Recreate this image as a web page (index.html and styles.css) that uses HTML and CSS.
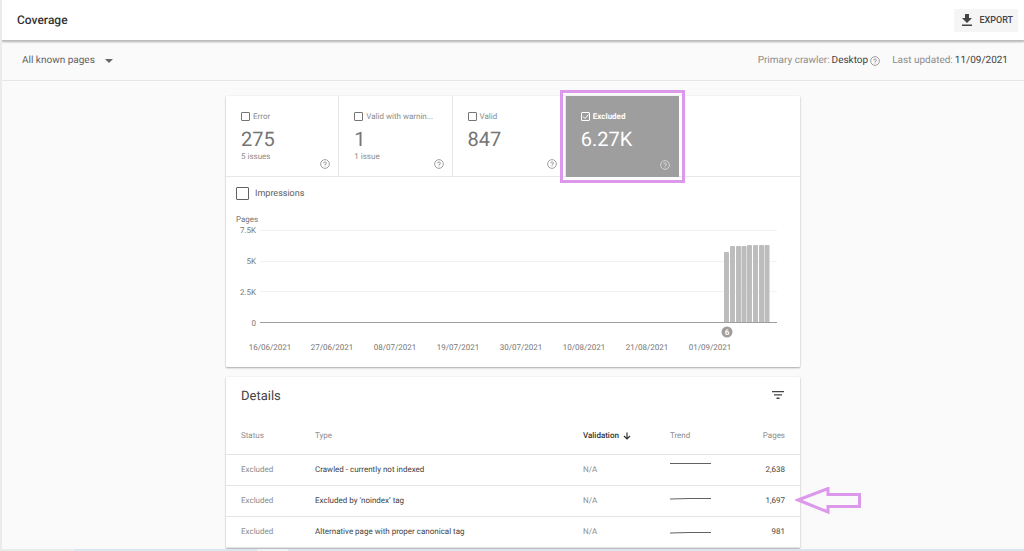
FILE: index.html
```html
<!DOCTYPE html>
<html lang="en">
<head>
<meta charset="utf-8">
<title>Coverage</title>
<link rel="stylesheet" href="styles.css">
</head>
<body>
<svg class="defs" aria-hidden="true">
  <symbol id="help" viewBox="0 0 24 24"><circle cx="12" cy="12" r="10.500" fill="none" stroke="currentColor" stroke-width="2"/><path fill="currentColor" d="M11 18h2v-2h-2v2zm1-12c-2.210 0-4 1.790-4 4h2c0-1.100.9-2 2-2s2 .9 2 2c0 2-3 1.750-3 5h2c0-2.250 3-2.500 3-5 0-2.210-1.790-4-4-4z"/></symbol>
</svg>
<header class="topbar">
  <h1 class="title">Coverage</h1>
  <button class="export" type="button">
    <svg class="export-icon" viewBox="0 0 14 14" aria-hidden="true"><path fill="currentColor" d="M5 1h4v4h3L7 10 2 5h3zM2 11.500h10V13H2z"/></svg>
    EXPORT
  </button>
</header>
<div class="subbar">
  <div class="picker">
    <select class="picker-select" aria-label="Pages filter"><option>All known pages</option></select>
  </div>
  <div class="meta">
    <span class="meta-item">Primary crawler: <b>Desktop</b> <svg class="help"><use href="#help"/></svg></span>
    <span class="meta-item">Last updated: <b>11/09/2021</b></span>
  </div>
</div>
<main class="content">
  <section class="card">
    <div class="tiles">
      <div class="tile">
        <label class="tile-label"><input class="check" type="checkbox"><span class="tile-name">Error</span></label>
        <div class="count">275</div>
        <div class="issues">5 issues</div>
        <svg class="help tile-help"><use href="#help"/></svg>
      </div>
      <div class="tile">
        <label class="tile-label"><input class="check" type="checkbox"><span class="tile-name">Valid with warnin...</span></label>
        <div class="count">1</div>
        <div class="issues">1 issue</div>
        <svg class="help tile-help"><use href="#help"/></svg>
      </div>
      <div class="tile">
        <label class="tile-label"><input class="check" type="checkbox"><span class="tile-name">Valid</span></label>
        <div class="count">847</div>
        <svg class="help tile-help"><use href="#help"/></svg>
      </div>
      <div class="tile tile-selected">
        <label class="tile-label"><span class="check-wrap"><input class="check" type="checkbox" checked><svg class="tick" viewBox="0 0 9 9" aria-hidden="true"><path d="M2 4.500L4 6.500L7.500 2.500"/></svg></span><span class="tile-name">Excluded</span></label>
        <div class="count">6.27K</div>
        <svg class="help tile-help"><use href="#help"/></svg>
      </div>
    </div>
    <label class="impressions"><input class="check check-large" type="checkbox">Impressions</label>
    <svg class="chart" viewBox="0 0 574 157" role="img" aria-label="Excluded pages over time">
      <g class="grid"><path d="M34 20.500H551M34 51.500H551M34 81.500H551"/></g>
      <g class="ylabels">
        <text class="axis-name" x="10" y="12">Pages</text>
        <text x="30" y="23">7.5K</text><text x="30" y="54">5K</text><text x="30" y="85">2.5K</text><text x="30" y="116">0</text>
      </g>
      <g class="bars">
        <rect x="498" y="42" width="5" height="71" rx="1"/><rect x="504" y="36" width="5" height="77" rx="1"/><rect x="510" y="36" width="5" height="77" rx="1"/><rect x="515.500" y="36" width="5" height="77" rx="1"/><rect x="521" y="35" width="5" height="78" rx="1"/><rect x="527" y="35" width="5" height="78" rx="1"/><rect x="533" y="35" width="5" height="78" rx="1"/><rect x="538.500" y="35" width="5" height="78" rx="1"/>
      </g>
      <path class="baseline" d="M34 112.500H551"/>
      <circle class="marker" cx="501" cy="122" r="5.500"/>
      <text class="marker-text" x="501" y="125">6</text>
      <g class="xlabels">
        <text x="44" y="140">16/06/2021</text><text x="106" y="140">27/06/2021</text><text x="169" y="140">08/07/2021</text><text x="232" y="140">19/07/2021</text><text x="295" y="140">30/07/2021</text><text x="358" y="140">10/08/2021</text><text x="421" y="140">21/08/2021</text><text x="484" y="140">01/09/2021</text>
      </g>
    </svg>
  </section>
  <section class="card">
    <div class="details-head">
      <h2 class="details-title">Details</h2>
      <button class="filter" type="button" aria-label="Filter rows"><svg class="filter-icon" viewBox="0 0 12 10"><path fill="currentColor" d="M0 0h12v1.300H0zM2 3.300h8v1.300H2zM4.500 6.600h3v1.300h-3z"/></svg></button>
    </div>
    <table class="table">
      <thead>
        <tr><th class="col-status">Status</th><th>Type</th><th class="col-validation">Validation <svg class="sort" viewBox="0 0 8 8"><path d="M4 .5V7M1 4l3 3 3-3" fill="none" stroke="currentColor" stroke-width="1.200"/></svg></th><th class="col-trend">Trend</th><th class="col-pages">Pages</th></tr>
      </thead>
      <tbody>
        <tr><td class="muted col-status">Excluded</td><td>Crawled - currently not indexed</td><td class="muted">N/A</td><td><svg class="spark" viewBox="0 0 41 20"><path d="M0 3.500H41"/></svg></td><td class="col-pages">2,638</td></tr>
        <tr><td class="muted col-status">Excluded</td><td>Excluded by ‘noindex’ tag</td><td class="muted">N/A</td><td><svg class="spark" viewBox="0 0 41 20"><path d="M0 8L20 7.500H41"/></svg></td><td class="col-pages">1,697<svg class="pointer" viewBox="0 0 67 28" aria-hidden="true"><path d="M3 13L33 1.500V7.500H64.500V19.500H33V25z"/></svg></td></tr>
        <tr><td class="muted col-status">Excluded</td><td>Alternative page with proper canonical tag</td><td class="muted">N/A</td><td><svg class="spark" viewBox="0 0 41 20"><path d="M0 11L20 10.500H41"/></svg></td><td class="col-pages">981</td></tr>
      </tbody>
    </table>
  </section>
</main>
<div class="edge"></div>
</body>
</html>
```
FILE: styles.css
```css
* { box-sizing: border-box; }
body {
  margin: 0;
  height: 100vh;
  display: flex;
  flex-direction: column;
  border-left: 2px solid #ebebeb;
  background: #fafafa;
  color: #444;
  font-family: Roboto, "Liberation Sans", sans-serif;
  font-size: 8px;
  text-rendering: geometricPrecision;
  overflow: hidden;
}
h1, h2 { margin: 0; }
button { border: 0; font-family: inherit; cursor: pointer; }
.defs { position: absolute; width: 0; height: 0; }

.topbar {
  flex: none;
  height: 41px;
  display: flex;
  align-items: center;
  justify-content: space-between;
  padding: 0 6px 0 15px;
  background: #fff;
  border-bottom: 1px solid #bdbdbd;
  box-shadow: 0 1px 2px rgba(0, 0, 0, .3);
}
.title { font-size: 12px; font-weight: 500; color: #333; }
.export {
  height: 23px;
  display: flex;
  align-items: center;
  gap: 5px;
  padding: 0 5px 0 6px;
  background: #f5f5f5;
  color: #444;
  font-size: 9px;
  font-weight: 500;
}
.export-icon { width: 14px; height: 14px; }

.subbar {
  flex: none;
  height: 40px;
  display: flex;
  align-items: center;
  justify-content: space-between;
  padding: 0 16px 0 20px;
  border-bottom: 1px solid #e6e6e6;
}
.picker { display: flex; align-items: center; }
.picker::after {
  content: "";
  margin-left: -8px;
  border: 4px solid transparent;
  border-top-color: #666;
  border-bottom: 0;
  pointer-events: none;
}
.picker-select {
  appearance: none;
  width: 91px;
  padding: 0;
  border: 0;
  background: none;
  color: #616161;
  font: 10px Roboto, sans-serif;
  text-rendering: inherit;
}
.meta { display: flex; gap: 12px; font-size: 10px; line-height: 14px; color: #8c8c8c; }
.meta-item { display: flex; align-items: center; gap: 2px; }
.meta b { font-weight: 400; color: #444; }
.help { width: 10px; height: 10px; color: #8c8c8c; }

.content {
  flex: 1;
  min-height: 0;
  display: flex;
  flex-direction: column;
  align-items: center;
  gap: 10px;
  padding: 15px 16px 0;
  overflow: hidden;
}
.card {
  flex: none;
  width: 100%;
  max-width: 574px;
  background: #fff;
  border-radius: 1px;
  box-shadow: 0 1px 2px rgba(0, 0, 0, .32), 0 0 1px rgba(0, 0, 0, .15);
}
.tiles {
  display: grid;
  grid-template-columns: repeat(4, minmax(0, 15fr)) minmax(0, 16fr);
  border-bottom: 1px solid #e6e6e6;
}
.tile {
  position: relative;
  height: 80px;
  padding: 14px 15px 0;
  border-right: 1px solid #e6e6e6;
  color: #8c8c8c;
}
.tile-label { display: flex; align-items: center; gap: 3px; height: 12px; }
.tile-name { white-space: nowrap; }
.check {
  appearance: none;
  display: block;
  flex: none;
  width: 9px;
  height: 9px;
  margin: 0;
  border: 1px solid #757575;
  border-radius: 1px;
}
.check:checked { border-color: #fff; }
.check-wrap { position: relative; }
.tick {
  position: absolute;
  inset: 0;
  width: 9px;
  height: 9px;
  fill: none;
  stroke: #fff;
}
.count { margin-top: 5px; font-size: 20px; line-height: 24px; color: #757575; }
.issues { line-height: 12px; }
.tile-help { position: absolute; right: 8px; bottom: 7px; }
.tile-selected { height: 81px; margin-bottom: -1px; background: #9e9e9e; border-color: #9e9e9e; color: #fff; }
.tile-selected .tile-name { font-weight: 700; }
.tile-selected .count { color: #fff; }
.tile-selected .help { color: #e0e0e0; }
.tile-selected::after {
  content: "";
  position: absolute;
  inset: -6px -7px -6px -6px;
  border: 3px solid #dc98ea;
  pointer-events: none;
}
.impressions {
  display: flex;
  align-items: center;
  gap: 6px;
  height: 33px;
  padding-left: 10px;
  color: #616161;
  font-size: 9px;
}
.check-large { width: 13px; height: 13px; border: 1px solid #616161; }

.chart { display: block; width: 100%; height: auto; font-size: 8px; fill: #757575; }
.grid path { stroke: #f2f2f2; }
.baseline { stroke: #9e9e9e; }
.ylabels text { text-anchor: end; }
.ylabels .axis-name { text-anchor: start; }
.xlabels text { text-anchor: middle; }
.bars { fill: #bdbdbd; }
.marker { fill: #9e9e9e; }
.marker-text { fill: #fff; text-anchor: middle; font-weight: 700; }

.details-head {
  display: flex;
  align-items: center;
  justify-content: space-between;
  height: 40px;
  padding: 0 16px 0 15px;
}
.details-title { font-size: 13px; line-height: 16px; font-weight: 400; color: #444; }
.filter { padding: 0 0 2px; background: none; color: #444; }
.filter-icon { display: block; width: 12px; height: 10px; }
.table { width: 100%; border-collapse: collapse; table-layout: fixed; }
.table th, .table td {
  height: 31px;
  padding: 0;
  border-bottom: 1px solid #e4e4e4;
  text-align: left;
  vertical-align: middle;
}
.table th { height: 37px; font-weight: 400; color: #8c8c8c; }
.table .col-status { width: 89px; padding-left: 15px; }
.table .col-validation { width: 87px; font-weight: 500; color: #333; }
.table .col-trend { width: 80px; }
.table .col-pages { position: relative; width: 50px; padding-right: 15px; text-align: right; }
.table .muted { color: #8c8c8c; }
.sort { width: 8px; height: 8px; margin-left: 2px; vertical-align: middle; }
.spark { display: block; width: 41px; height: 20px; fill: none; stroke: #616161; }
.pointer {
  position: absolute;
  left: 45px;
  top: 1px;
  width: 67px;
  height: 28px;
  fill: none;
  stroke: #dc98ea;
  stroke-width: 3;
}
.edge {
  flex: none;
  height: 2px;
  background: linear-gradient(90deg, #ebebeb 7%, #d9e7ee 7% 25%, #ebf5f7 25% 28%, #dce5ef 28%);
}
```
